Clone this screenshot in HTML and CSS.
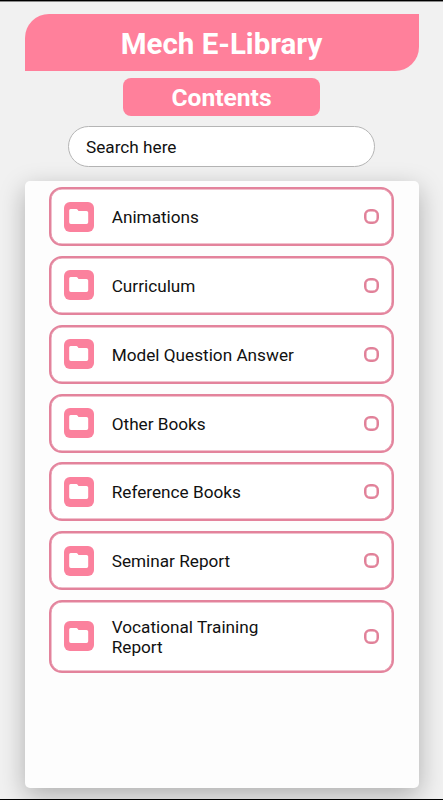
FILE: index.html
```html
<!DOCTYPE html>
<html lang="en">
<head>
<meta charset="utf-8">
<title>Mech E-Library</title>
<link rel="stylesheet" href="styles.css">
</head>
<body>
<svg class="defs" width="0" height="0"><symbol id="folder" viewBox="0 0 30 30"><path d="M6.6 7h5.8q.8 0 1.2.7l.9 1.200h8q1.700 0 1.700 1.700v9.700q0 1.700-1.700 1.700H6.900q-1.700 0-1.700-1.700V8.600Q5.200 7 6.600 7z" fill="#fff"/></symbol></svg>
<main class="app">
  <h1 class="title">Mech E-Library</h1>
  <h2 class="subtitle">Contents</h2>
  <input class="search" type="text" placeholder="Search here" aria-label="Search here">
  <section class="panel">
    <ul class="list">
      <li class="item"><svg class="icon"><use href="#folder"/></svg><span class="label">Animations</span><i class="mark"></i></li>
      <li class="item"><svg class="icon"><use href="#folder"/></svg><span class="label">Curriculum</span><i class="mark"></i></li>
      <li class="item"><svg class="icon"><use href="#folder"/></svg><span class="label">Model Question Answer</span><i class="mark"></i></li>
      <li class="item"><svg class="icon"><use href="#folder"/></svg><span class="label">Other Books</span><i class="mark"></i></li>
      <li class="item"><svg class="icon"><use href="#folder"/></svg><span class="label">Reference Books</span><i class="mark"></i></li>
      <li class="item"><svg class="icon"><use href="#folder"/></svg><span class="label">Seminar Report</span><i class="mark"></i></li>
      <li class="item tall"><svg class="icon"><use href="#folder"/></svg><span class="label">Vocational Training Report</span><i class="mark"></i></li>
    </ul>
  </section>
</main>
</body>
</html>
```
FILE: styles.css
```css
* { box-sizing: border-box; }
body { margin: 0; font-family: Roboto, sans-serif; color: #111; }
.defs { display: block; }
.app {
  display: flex;
  flex-direction: column;
  align-items: center;
  height: 800px;
  padding: 13px 24.5px 0;
  overflow: hidden;
  background: #f1f1f1;
  border-top: 1px solid #000;
  border-bottom: 1px solid #000;
  box-shadow: inset 0 .6px 0 #222;
}
.title, .subtitle {
  margin: 0;
  background: #ff809b;
  color: #fff;
  font-weight: 700;
  text-align: center;
}
.title {
  width: 100%;
  height: 57px;
  border-radius: 24px 0 24px 0;
  font-size: 29.5px;
  line-height: 60px;
}
.subtitle {
  width: 197px;
  height: 38px;
  margin-top: 6.5px;
  border-radius: 8px;
  font-size: 24.6px;
  line-height: 39px;
}
.search {
  width: 307px;
  height: 41.5px;
  margin-top: 10px;
  padding: 2px 17px 0;
  border: 1px solid #b5b5b5;
  border-radius: 21px;
  background: #fff;
  font: 17.2px Roboto, sans-serif;
}
.search::placeholder { color: #111; opacity: 1; }
.panel {
  width: 100%;
  height: 607px;
  flex: none;
  margin-top: 14px;
  padding: 6.2px 24.5px;
  border-radius: 5px;
  background: #fdfdfd;
  box-shadow: 0 8px 26px rgba(0, 0, 0, .28);
}
.list {
  display: flex;
  flex-direction: column;
  gap: 9.8px;
  margin: 0;
  padding: 0;
  list-style: none;
}
.item {
  display: flex;
  align-items: center;
  height: 59px;
  padding: 0 12px;
  border: 2px solid #e3839c;
  border-radius: 13px;
  background: #fff;
  box-shadow: inset 0 0 0 .5px #e3839c;
}
.tall { height: 73px; }
.icon {
  width: 30px;
  height: 30px;
  margin-left: .5px;
  border-radius: 6px;
  background: #fb819d;
}
.label {
  width: 190px;
  margin-left: 18.2px;
  padding-top: 1px;
  font-size: 17.2px;
  line-height: 20px;
}
.mark {
  width: 15px;
  height: 15px;
  margin: 0 1px 0 auto;
  border: 2px solid #e18199;
  border-radius: 6.2px;
  box-shadow: inset 0 0 0 .5px #e18199;
}
```
